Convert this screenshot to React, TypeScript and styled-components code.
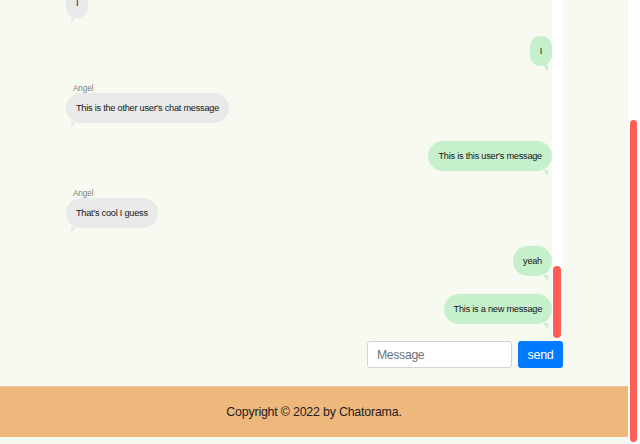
import React, { useLayoutEffect, useRef } from "react";
import styled, { createGlobalStyle } from "styled-components";

type Message = {
  mine: boolean;
  name?: string;
  text: string;
};

const filler: Message[] = Array.from({ length: 40 }, (_, i) =>
  i % 2 === 0
    ? { mine: false, name: "Angel", text: i % 4 === 0 ? "hey" : "how are you?" }
    : { mine: true, text: i % 4 === 1 ? "hi" : "good, you?" }
);

const messages: Message[] = [
  ...filler,
  { mine: false, name: "Angel", text: "I" },
  { mine: true, text: "I" },
  { mine: false, name: "Angel", text: "This is the other user's chat message" },
  { mine: true, text: "This is this user's message" },
  { mine: false, name: "Angel", text: "That's cool I guess" },
  { mine: true, text: "yeah" },
  { mine: true, text: "This is a new message" },
];

const GlobalStyle = createGlobalStyle`
  html, body {
    margin: 0;
    padding: 0;
    background: #f7faf0;
    font-family: "Liberation Sans", Arial, sans-serif;
  }
`;

const App = () => {
  const chatRef = useRef<HTMLDivElement>(null);
  const mainRef = useRef<HTMLDivElement>(null);

  useLayoutEffect(() => {
    if (chatRef.current) {
      chatRef.current.scrollTop = chatRef.current.scrollHeight;
    }
    if (mainRef.current) {
      mainRef.current.scrollTop = mainRef.current.scrollHeight;
    }
  }, []);

  return (
    <>
      <GlobalStyle />
      <Page>
        <Main ref={mainRef}>
          <Header>
            <Title>Chatorama</Title>
          </Header>
          <Container>
            <ChatBox>
              <MessageList ref={chatRef}>
                {messages.map((m, i) => (
                  <MessageRow key={i} $mine={m.mine}>
                    {m.name && <Name>{m.name}</Name>}
                    <Bubble $mine={m.mine}>{m.text}</Bubble>
                  </MessageRow>
                ))}
              </MessageList>
              <ChatTrack>
                <Thumb $size={72} />
              </ChatTrack>
            </ChatBox>
            <InputRow>
              <MessageInput type="text" placeholder="Message" />
              <SendButton>send</SendButton>
            </InputRow>
          </Container>
          <Footer>Copyright © 2022 by Chatorama.</Footer>
          <BottomSpace />
        </Main>
        <PageTrack>
          <Thumb $size={322} />
        </PageTrack>
      </Page>
    </>
  );
};

export default App;

const Page = styled.div`
  display: flex;
  height: 444px;
`;

const Main = styled.div`
  flex: 1;
  min-width: 0;
  overflow-y: auto;
`;

const PageTrack = styled.div`
  width: 12px;
  box-sizing: border-box;
  padding: 120px 3px 2px 2px;
  background: #fff;
  display: flex;
  flex-direction: column;
`;

const ChatTrack = styled.div`
  width: 11px;
  box-sizing: border-box;
  padding: 0 2px 2px 1px;
  background: #fff;
  display: flex;
  flex-direction: column;
  justify-content: flex-end;
`;

const Thumb = styled.div<{ $size: number }>`
  height: ${(p) => p.$size}px;
  border-radius: 4px;
  background: #fd5f56;
`;

const Header = styled.header`
  height: 80px;
  display: flex;
  align-items: center;
  justify-content: center;
`;

const Title = styled.h1`
  margin: 0;
  font-size: 20px;
  color: #222;
`;

const Container = styled.div`
  width: 498px;
  margin: 0 auto;
`;

const ChatBox = styled.div`
  display: flex;
  height: 426px;
`;

const MessageList = styled.div`
  flex: 1;
  display: flex;
  flex-direction: column;
  gap: 18px;
  padding: 18px 0 16px 1px;
  overflow-y: auto;
`;

const MessageRow = styled.div<{ $mine: boolean }>`
  display: flex;
  flex-direction: column;
  align-items: ${(p) => (p.$mine ? "flex-end" : "flex-start")};
`;

const Name = styled.div`
  font-size: 8.2px;
  line-height: 9px;
  color: #7d7d7d;
  padding-left: 7px;
  letter-spacing: -0.1px;
`;

const Bubble = styled.div<{ $mine: boolean }>`
  position: relative;
  display: inline-flex;
  align-items: center;
  flex-shrink: 0;
  height: 30px;
  padding: 0 10px;
  border-radius: 15px;
  font-size: 9.2px;
  letter-spacing: -0.24px;
  color: #151515;
  white-space: nowrap;
  background: ${(p) => (p.$mine ? "#c6efcc" : "#e9e9e9")};

  &::after {
    content: "";
    position: absolute;
    bottom: -5px;
    width: 0;
    height: 0;
    border-top: 6px solid ${(p) => (p.$mine ? "#c6efcc" : "#e9e9e9")};
    ${(p) =>
      p.$mine
        ? "right: 4px; border-left: 5px solid transparent;"
        : "left: 5px; border-right: 5px solid transparent;"}
  }
`;

const InputRow = styled.div`
  display: flex;
  justify-content: flex-end;
  gap: 6px;
  margin-top: 1px;
`;

const MessageInput = styled.input`
  box-sizing: border-box;
  width: 145px;
  height: 27px;
  padding: 0 9px;
  border: 1px solid #ced4da;
  border-radius: 3px;
  background: #fff;
  font-family: "Liberation Sans", Arial, sans-serif;
  font-size: 12.2px;
  letter-spacing: -0.3px;
  color: #495057;
  outline: none;

  &::placeholder {
    color: #6c757d;
  }
`;

const SendButton = styled.button`
  box-sizing: border-box;
  width: 45px;
  height: 27px;
  padding: 0;
  border: none;
  border-radius: 3px;
  background: #007bff;
  color: #fff;
  font-family: "Liberation Sans", Arial, sans-serif;
  font-size: 12.5px;
  letter-spacing: -0.3px;
  cursor: pointer;
`;

const Footer = styled.footer`
  margin-top: 18px;
  height: 51px;
  box-sizing: border-box;
  border-top: 1px solid #f2c392;
  background: #eeb77c;
  display: flex;
  align-items: center;
  justify-content: center;
  font-size: 12.4px;
  letter-spacing: -0.2px;
  color: #222;
`;

const BottomSpace = styled.div`
  height: 7px;
`;
